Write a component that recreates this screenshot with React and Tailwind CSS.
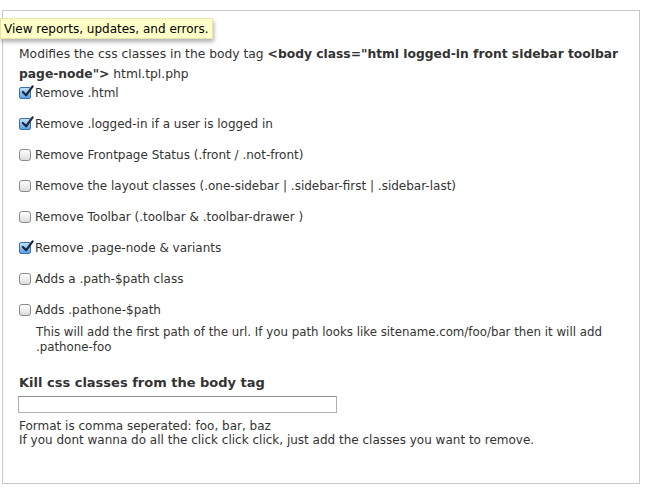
import React from 'react';

function Box({ checked }) {
    if (checked) {
        return (
            <span className="relative inline-block w-[12px] h-[12px] shrink-0 rounded-[2px] border border-[#3f6fa8] bg-gradient-to-b from-[#bfe0ff] to-[#5aa2ea]">
                <svg viewBox="0 0 14 14" className="absolute left-[1px] top-[-3px] w-[13px] h-[13px]">
                    <path d="M2 7.5 L5.5 11 L12.5 1.5" fill="none" stroke="#1b2a3a" strokeWidth="2.4" strokeLinecap="round" strokeLinejoin="round" />
                </svg>
            </span>
        );
    }
    return (
        <span className="inline-block w-[12px] h-[12px] shrink-0 rounded-[3px] border border-[#8a8a8a] bg-gradient-to-b from-[#ffffff] to-[#dcdcdc]" />
    );
}

function Item({ checked, label, className = '' }) {
    return (
        <div className={`flex items-center gap-[4px] h-[18px] ${className}`}>
            <Box checked={checked} />
            <span>{label}</span>
        </div>
    );
}

const items = [
    { checked: false, label: 'Remove Frontpage Status (.front / .not-front)' },
    { checked: false, label: 'Remove the layout classes (.one-sidebar | .sidebar-first | .sidebar-last)' },
    { checked: false, label: 'Remove Toolbar (.toolbar & .toolbar-drawer )' },
    { checked: true, label: 'Remove .page-node & variants' },
    { checked: false, label: 'Adds a .path-$path class' },
    { checked: false, label: 'Adds .pathone-$path' },
];

export default function App() {
    return (
        <div className="relative bg-white w-[647px] h-[490px] text-[#333] text-[12px]" style={{ fontFamily: '"DejaVu Sans", Verdana, sans-serif' }}>
            <div className="absolute left-[2px] top-[10px] w-[638px] h-[474px] border border-[#c8c8c8]" />

            <div className="relative pl-[19px] pt-[44px]">
                <p className="leading-[20px] text-[12.3px] pr-[20px]">
                    Modifies the css classes in the body tag{' '}
                    <b>&lt;body class="html logged-in front sidebar toolbar page-node"&gt;</b> html.tpl.php
                </p>

                <Item checked label="Remove .html" />
                <Item checked label="Remove .logged-in if a user is logged in" className="mt-[13px]" />
                {items.map((it) => (
                    <Item key={it.label} checked={it.checked} label={it.label} className="mt-[13px]" />
                ))}

                <p className="ml-[17px] mt-[6px] leading-[15px] pr-[20px] text-[11.8px]">
                    This will add the first path of the url. If you path looks like sitename.com/foo/bar then it will add .pathone-foo
                </p>

                <h3 className="mt-[19px] font-bold text-[13px] leading-[18px]">Kill css classes from the body tag</h3>
                <input type="text" className="block mt-[4px] -ml-[1px] w-[319px] h-[17px] border border-[#b0b0b0] border-t-[#8c8c8c] bg-white outline-none" />
                <div className="mt-[6px] leading-[14px]">
                    <div>Format is comma seperated: foo, bar, baz</div>
                    <div>If you dont wanna do all the click click click, just add the classes you want to remove.</div>
                </div>
            </div>

            <div className="absolute left-[0px] top-[18px] h-[21px] px-[3px] flex items-center bg-[#ffffc8] border border-[#e8e8a8] shadow-[1px_3px_4px_rgba(0,0,0,0.3)] text-black text-[12px]" style={{ fontFamily: '"DejaVu Sans", Verdana, sans-serif' }}>
                View reports, updates, and errors.
            </div>
        </div>
    );
}
